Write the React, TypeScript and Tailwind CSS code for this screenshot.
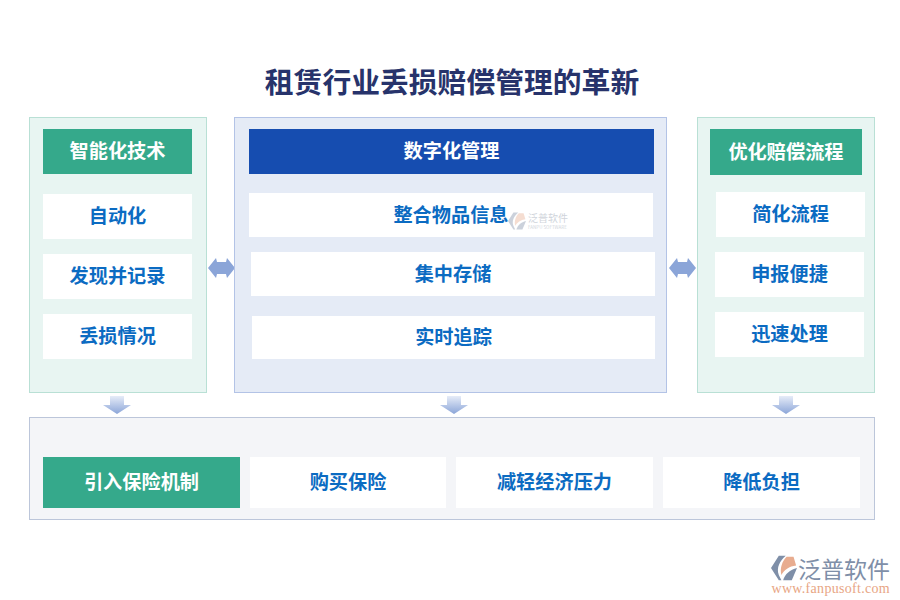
const font = { fontFamily: '"Noto Sans CJK SC", "Liberation Sans", sans-serif' };

function LogoMark({ size }: { size: number }) {
	return (
		<svg width={size} height={size} viewBox="0 0 30 30" fill="none">
			<path d="M9 1 L17 1 C10 7 6 15 9 23 L12 29 L9 29 L0 15 Z" fill="#7f8fa8" />
			<path d="M18 2 C13 7 10 15 12 23 C15 17 21 13 29 12 L26 2 Z" fill="#e8ac8f" />
			<path d="M14 29 C16 22 22 17 30 15 L24 29 Z" fill="#7f8fa8" />
		</svg>
	);
}

function DoubleArrow() {
	return (
		<svg width="27" height="22" viewBox="0 0 27 22">
			<path d="M0 11 L8 1 L9 5 L18 5 L19 1 L27 11 L19 21 L18 17 L9 17 L8 21 Z" fill="#8ba5d8" />
		</svg>
	);
}

function DownArrow({ id }: { id: string }) {
	return (
		<svg width="28" height="18" viewBox="0 0 28 18">
			<defs>
				<linearGradient id={id} x1="0" y1="0" x2="0" y2="1">
					<stop offset="0" stopColor="#e6ecf8" />
					<stop offset="1" stopColor="#8ba5d8" />
				</linearGradient>
			</defs>
			<path d="M7 0 L21 0 L21 9 L28 9 L14 18 L0 9 L7 9 Z" fill={`url(#${id})`} />
		</svg>
	);
}

function Row({ text, className }: { text: string; className: string }) {
	return (
		<div className={"flex items-center justify-center bg-white pb-[2px] text-[19.2px] font-bold text-[#0b6bc2] " + className}>
			{text}
		</div>
	);
}

function App() {
	return (
		<div className="w-[900px] h-[600px] bg-white flex flex-col overflow-hidden" style={font}>
			<h1 className="h-[117px] pt-[61px] text-center text-[28.8px] leading-[40px] font-bold text-[#27336b] pl-[4px]">
				租赁行业丢损赔偿管理的革新
			</h1>

			<div className="flex items-start pl-[29px]">
				<section className="w-[178px] h-[276px] bg-[#e8f5f2] border border-[#b9e0d5] pt-[11px] pl-[13px] flex flex-col">
					<div className="w-[149px] h-[45px] bg-[#35a98b] pb-[2px] text-white text-[19.2px] font-bold flex items-center justify-center">
						智能化技术
					</div>
					<Row text="自动化" className="w-[149px] h-[45px] mt-[20px]" />
					<Row text="发现并记录" className="w-[149px] h-[45px] mt-[15px]" />
					<Row text="丢损情况" className="w-[149px] h-[45px] mt-[15px]" />
				</section>

				<div className="w-[27px] flex justify-center ml-[1px] mr-[-1px] pt-[140px]">
					<DoubleArrow />
				</div>

				<section className="w-[433px] h-[276px] bg-[#e5ebf6] border border-[#b3c3e6] pt-[11px] pl-[14px] flex flex-col">
					<div className="w-[405px] h-[45px] bg-[#164db0] pb-[2px] text-white text-[19.2px] font-bold flex items-center justify-center">
						数字化管理
					</div>
					<div className="relative mt-[19px]">
						<Row text="整合物品信息" className="w-[404px] h-[44px]" />
						<div className="absolute left-[259px] top-[19px] flex items-center gap-[2px] opacity-40">
							<LogoMark size={18} />
							<div className="flex flex-col">
								<span className="text-[10px] leading-[12px] text-[#8a94a6]">泛普软件</span>
								<span className="text-[4.5px] leading-[6px] text-[#8a94a6]">FANPU SOFTWARE</span>
							</div>
						</div>
					</div>
					<Row text="集中存储" className="w-[404px] h-[44px] mt-[15px] ml-[2px]" />
					<Row text="实时追踪" className="w-[403px] h-[43px] mt-[20px] ml-[3px]" />
				</section>

				<div className="w-[30px] flex justify-center pt-[140px]">
					<DoubleArrow />
				</div>

				<section className="w-[178px] h-[276px] bg-[#e8f5f2] border border-[#b9e0d5] pt-[11px] pl-[12px] flex flex-col">
					<div className="w-[152px] h-[46px] bg-[#35a98b] pb-[2px] text-white text-[19.2px] font-bold flex items-center justify-center">
						优化赔偿流程
					</div>
					<Row text="简化流程" className="w-[149px] h-[45px] mt-[17px] ml-[6px]" />
					<Row text="申报便捷" className="w-[149px] h-[45px] mt-[15px] ml-[5px]" />
					<Row text="迅速处理" className="w-[149px] h-[45px] mt-[15px] ml-[5px]" />
				</section>
			</div>

			<div className="h-[24px] flex items-center pl-[103px]">
				<DownArrow id="down-a" />
				<div className="ml-[309px]">
					<DownArrow id="down-b" />
				</div>
				<div className="ml-[304px]">
					<DownArrow id="down-c" />
				</div>
			</div>

			<section className="ml-[29px] w-[846px] h-[103px] bg-[#f4f5f8] border border-[#bcc6da] pt-[39px] pl-[13px] flex gap-[10px]">
				<div className="w-[197px] h-[51px] bg-[#35a98b] pb-[2px] text-white text-[19.2px] font-bold flex items-center justify-center">
					引入保险机制
				</div>
				<Row text="购买保险" className="w-[196px] h-[51px]" />
				<Row text="减轻经济压力" className="w-[197px] h-[51px]" />
				<Row text="降低负担" className="w-[197px] h-[51px]" />
			</section>

			<div className="flex justify-end pr-[10px] mt-[35px]">
				<div className="flex flex-col">
					<div className="flex items-center gap-[1px]">
						<LogoMark size={26} />
						<span className="text-[23px] leading-[26px] text-[#7f8fa8]">泛普软件</span>
					</div>
					<span className="text-[14px] leading-[14px] mt-[1px] text-[#e8a584] font-['Liberation_Serif',serif] tracking-[0.3px] text-right">
						www.fanpusoft.com
					</span>
				</div>
			</div>
		</div>
	);
}

export default App;
